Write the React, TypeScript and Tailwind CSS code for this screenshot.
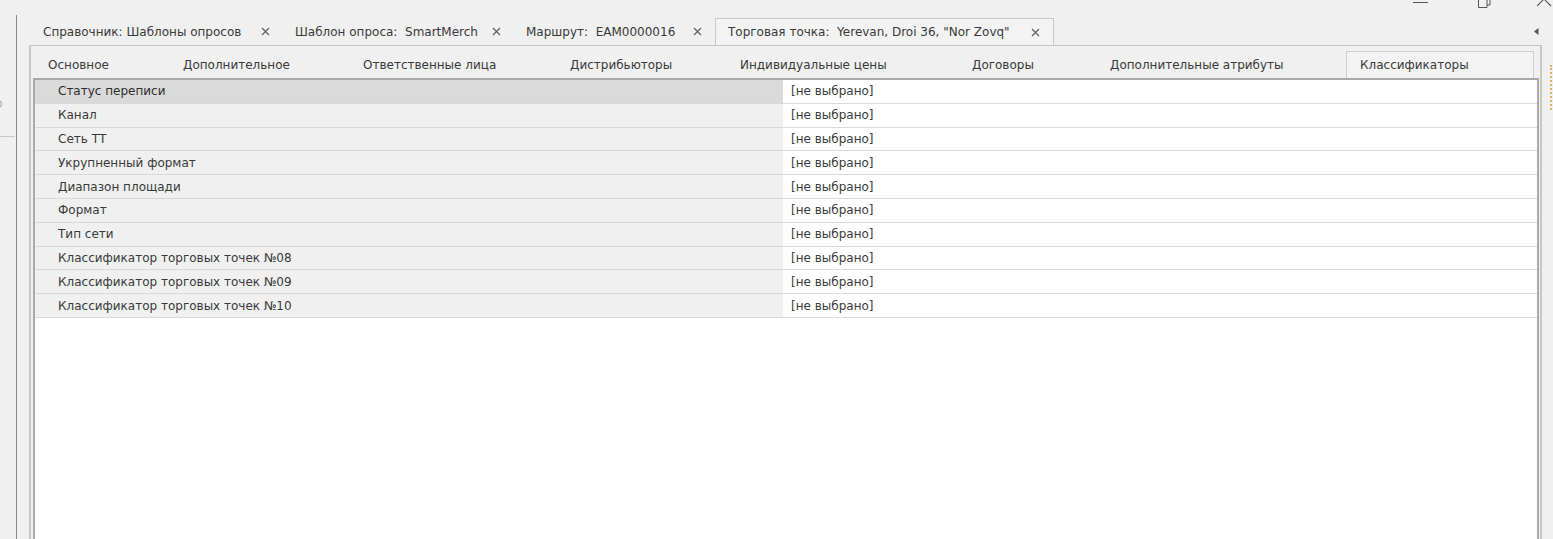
import React from "react";

// вкладки документов сверху
const docTabs = [
  { title: "Справочник: Шаблоны опросов", width: 252 },
  { title: "Шаблон опроса:  SmartMerch", width: 231 },
  { title: "Маршрут:  EAM0000016", width: 201 },
  { title: 'Торговая точка:  Yerevan, Droi 36, "Nor Zovq"', width: 339, active: true },
];

// вкладки карточки торговой точки
const pageTabs = [
  { title: "Основное", width: 135 },
  { title: "Дополнительное", width: 180 },
  { title: "Ответственные лица", width: 207 },
  { title: "Дистрибьюторы", width: 170 },
  { title: "Индивидуальные цены", width: 232 },
  { title: "Договоры", width: 138 },
  { title: "Дополнительные атрибуты", width: 250 },
  { title: "Классификаторы", width: 188, active: true },
];

const rows = [
  "Статус переписи",
  "Канал",
  "Сеть ТТ",
  "Укрупненный формат",
  "Диапазон площади",
  "Формат",
  "Тип сети",
  "Классификатор торговых точек №08",
  "Классификатор торговых точек №09",
  "Классификатор торговых точек №10",
];

function CloseIcon() {
  return (
    <svg width="9" height="9" viewBox="0 0 9 9" className="shrink-0">
      <path d="M1 1L8 8M8 1L1 8" stroke="#5f5f5f" strokeWidth="1.2" />
    </svg>
  );
}

export default function App() {
  return (
    <div className="w-[1553px] h-[539px] bg-[#f0f0f0] overflow-hidden flex flex-col font-['DejaVu_Sans',sans-serif] text-[12px] text-[#3a3a3a]">
      {/* кнопки окна, обрезаны сверху */}
      <div className="h-[15px] flex justify-end items-start shrink-0">
        <div className="w-[15px] h-px bg-[#555] mt-[2px] mr-[49px]" />
        <svg width="14" height="9" viewBox="0 0 14 9" className="mr-[46px] -mt-[1px]">
          <path d="M1.5 0V8.5H10V0" stroke="#555" fill="none" strokeWidth="1" />
          <path d="M4 0V-2H13V6H10" stroke="#555" fill="none" strokeWidth="1" />
        </svg>
        <svg width="16" height="8" viewBox="0 0 16 8">
          <path d="M0 -8L14 6M14 -8L0 6" stroke="#555" fill="none" strokeWidth="1.1" />
        </svg>
      </div>

      <div className="flex-1 flex min-h-0">
        {/* левая панель */}
        <div className="w-[17px] shrink-0 border-r border-[#8a8a8a] flex flex-col">
          <div className="h-[85px]" />
          <div className="w-[8px] h-[8px] rounded-full border border-[#9a9a9a] -ml-[6px]" />
          <div className="h-[28px]" />
          <div className="w-[15px] h-px bg-[#c8c8c8]" />
        </div>

        {/* основная область */}
        <div className="flex-1 flex flex-col pl-[12px] min-w-0">
          {/* полоса вкладок документов */}
          <div className="h-[30px] w-[1524px] flex items-end pl-[2px] shrink-0">
            {docTabs.map((t) => (
              <div
                key={t.title}
                style={{ width: t.width }}
                className={
                  t.active
                    ? "h-[27px] flex items-center pl-[12px] pr-[13px] border-l border-t border-r border-[#c9c9c9] bg-[#f3f3f3]"
                    : "h-[27px] flex items-center pl-[12px] pr-[13px]"
                }
              >
                <span className="whitespace-pre">{t.title}</span>
                <div className="flex-1" />
                <CloseIcon />
              </div>
            ))}
            <div className="flex-1" />
            <div className="h-[27px] flex items-center pr-[14px]">
              <svg width="5" height="7" viewBox="0 0 5 7">
                <path d="M4.5 0V7L0 3.5Z" fill="#555" />
              </svg>
            </div>
          </div>

          <div className="flex-1 flex min-h-0">
            {/* панель карточки */}
            <div className="w-[1513px] shrink-0 border-t border-[#c6c6c6] border-l-2 border-r-2 border-l-[#c8c8c8] border-r-[#c8c8c8] flex flex-col min-h-0">
              {/* вкладки карточки */}
              <div className="h-[32px] flex items-end pl-[3px] shrink-0">
                {pageTabs.map((t) => (
                  <div
                    key={t.title}
                    style={{ width: t.width }}
                    className={
                      t.active
                        ? "h-[27px] flex items-center pl-[13px] border-l border-t border-r border-[#cfcfcf] bg-[#f3f3f3]"
                        : "h-[27px] flex items-center pl-[14px]"
                    }
                  >
                    {t.title}
                  </div>
                ))}
              </div>

              {/* таблица классификаторов */}
              <div className="flex-1 ml-[2px] w-[1506px] bg-white border-t-2 border-l-2 border-r-2 border-[#a9a9a9] flex flex-col">
                {rows.map((r, i) => (
                  <div key={r} className="h-[23.8px] flex border-b border-[#d9d9d9] shrink-0">
                    <div
                      className={
                        i === 0
                          ? "w-[748px] bg-[#dadada] flex items-center pl-[23px] text-[#2e2e2e]"
                          : "w-[748px] bg-[#f0f0f0] flex items-center pl-[23px]"
                      }
                    >
                      {r}
                    </div>
                    <div className="flex-1 flex items-center pl-[8px]">[не выбрано]</div>
                  </div>
                ))}
              </div>
            </div>
            {/* обрезанная боковая панель справа */}
            <div className="ml-[8px] mt-[20px] w-[3px] h-[45px] border-l-2 border-dotted border-[#d8b56e]" />
          </div>
        </div>
      </div>
    </div>
  );
}
